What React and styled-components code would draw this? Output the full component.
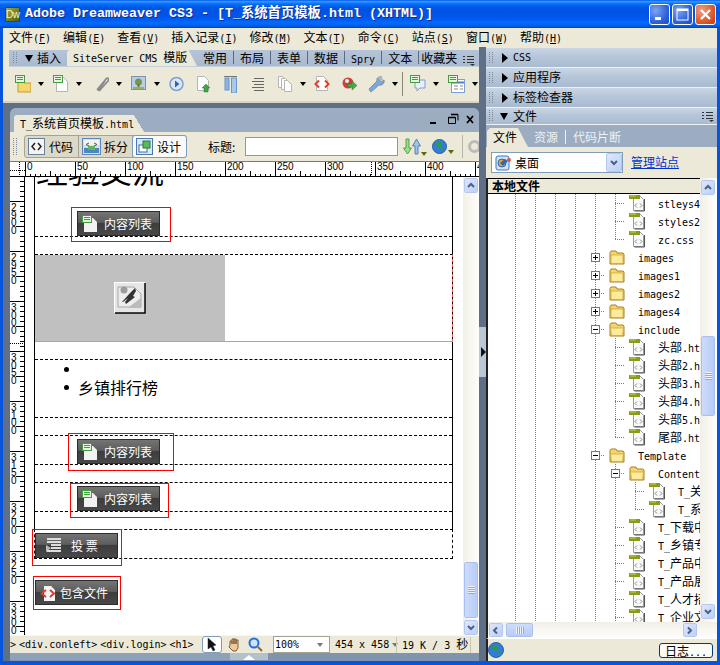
import React from 'react';
import styled, { createGlobalStyle, css } from 'styled-components';

const Global = createGlobalStyle`
  html, body { margin: 0; padding: 0; overflow: hidden; background: #0855dd; }
  * { box-sizing: border-box; }
`;

const CJK = `"Noto Sans CJK SC", "Liberation Sans", sans-serif`;
const beige = '#ece9d8';
const dotted = '#7d7d7d';

const Lat = styled.span`
  font-family: "DejaVu Sans Mono", monospace;
  font-size: 10px;
  white-space: pre;
`;
const Mix = ({ children }) =>
  String(children)
    .split(/([\x20-\x7e]+)/)
    .filter(Boolean)
    .map((s, i) => (/^[\x20-\x7e]/.test(s) ? <Lat key={i}>{s}</Lat> : <React.Fragment key={i}>{s}</React.Fragment>));

/* ---------- window frame ---------- */
const Win = styled.div`
  width: 720px;
  height: 665px;
  background: #0855dd;
  display: flex;
  flex-direction: column;
  overflow: hidden;
  font-family: ${CJK};
  font-size: 12px;
  line-height: 16px;
  color: #000;
`;
const TitleBar = styled.div`
  height: 28px;
  flex: none;
  display: flex;
  align-items: center;
  padding: 0 4px 0 5px;
  background: linear-gradient(to bottom, #0058ee 0%, #3593ff 5%, #288eff 8%, #127dff 11%, #036ffc 14%, #0262ee 20%, #0057e5 28%, #0054e3 36%, #0055eb 60%, #005bf5 70%, #026afe 80%, #0062ef 90%, #0052d6 96%, #0040ab 100%);
`;
const DwLogo = styled.div`
  width: 15px;
  height: 15px;
  flex: none;
  background: linear-gradient(135deg, #a3ac3a, #4f5c12);
  border: 1px solid #3e4a0e;
  color: #f4f6cf;
  font: 10px/13px "Liberation Sans", sans-serif;
  letter-spacing: -0.5px;
  text-align: center;
`;
const TitleText = styled.div`
  margin-left: 5px;
  flex: 1;
  font-family: "Liberation Mono", ${CJK};
  font-weight: bold;
  font-size: 13.33px;
  line-height: 16px;
  color: #fff;
  text-shadow: 1px 1px 0 #0f2a90;
  white-space: pre;
`;
const Caption = styled.div`
  width: 21px;
  height: 21px;
  margin-left: 2px;
  display: flex;
  align-items: center;
  justify-content: center;
  border: 1px solid #fff;
  border-radius: 3px;
  background: ${(p) => (p.$close ? 'radial-gradient(circle at 30% 30%, #f0a080, #dc5a2c 60%, #c23a10)' : 'radial-gradient(circle at 30% 30%, #7ea5f0, #2f62dc 60%, #1d49c4)')};
`;
const MenuBar = styled.div`
  height: 19px;
  flex: none;
  margin: 0 3px;
  padding-left: 6px;
  display: flex;
  align-items: center;
  gap: 12px;
  background: ${beige};
`;
const MenuItem = styled.span`
  white-space: nowrap;
  u { text-decoration: underline; }
`;
const Workspace = styled.div`
  flex: 1;
  min-height: 0;
  margin: 0 3px 4px;
  display: flex;
`;
const LeftCol = styled.div`
  width: 476px;
  flex: none;
  display: flex;
  flex-direction: column;
  background: #5f7086;
`;
const Splitter = styled.div`
  width: 7px;
  flex: none;
  background: #5f7086;
  padding-top: 280px;
`;
const SplitGrip = styled.div`
  height: 50px;
  background: #bac7d7;
  display: flex;
  align-items: center;
  padding: 0 0 0 2px;
  &::after {
    content: '';
    border-left: 5px solid #111;
    border-top: 5px solid transparent;
    border-bottom: 5px solid transparent;
  }
`;
const RightCol = styled.div`
  flex: 1;
  min-width: 0;
  display: flex;
  flex-direction: column;
  background: ${beige};
  padding-top: 1px;
`;

/* ---------- insert panel ---------- */
const InsertPanel = styled.div`
  height: 56px;
  flex: none;
  background: ${beige};
  padding: 3px 0 0 6px;
  border-bottom: 2px solid #d8d4c0;
`;
const TabStrip = styled.div`
  height: 17px;
  display: flex;
  align-items: flex-end;
  background: linear-gradient(#b5c4d8, #a9bacf);
  border-bottom: 1px solid #c5d0de;
`;
const Grip = styled.i`
  width: 5px;
  height: ${(p) => p.$h || 12}px;
  flex: none;
  align-self: center;
  margin: ${(p) => p.$m || '0'};
  background: repeating-linear-gradient(to bottom, #7a8798 0 1px, transparent 1px 2px) 0 0 / 1px 100% no-repeat,
    repeating-linear-gradient(to bottom, #7a8798 0 1px, transparent 1px 2px) 3px 0 / 1px 100% no-repeat;
`;
const Tri = styled.i`
  flex: none;
  align-self: center;
  ${(p) =>
    p.$open
      ? css`border-top: 7px solid #000; border-left: 4.5px solid transparent; border-right: 4.5px solid transparent;`
      : css`border-left: 6px solid #000; border-top: 5px solid transparent; border-bottom: 5px solid transparent;`}
  margin: ${(p) => p.$m || '0'};
`;
const StripLabel = styled.span`
  align-self: center;
  width: 30px;
  white-space: nowrap;
`;
const ActiveTab = styled.div`
  width: 130px;
  height: 17px;
  line-height: 15px;
  flex: none;
  padding-left: 6px;
  background: ${beige};
  white-space: pre;
  clip-path: polygon(0 100%, 0 3px, 3px 0, 121px 0, 100% 100%);
`;
const StripTab = styled.div`
  height: 13px;
  line-height: 13px;
  margin: 0 0 2px ${(p) => (p.$last ? -4 : 0)}px;
  padding: 0 6px;
  white-space: pre;
  border-right: ${(p) => (p.$last ? '0' : '1px solid #5c6c80')};
`;
const Tools = styled.div`
  height: 33px;
  padding: 8px 0 0 6px;
  display: flex;
  align-items: flex-start;
`;
const Tool = styled.div`
  width: ${(p) => p.$w}px;
  flex: none;
  display: flex;
  align-items: center;
`;
const Caret = styled.i`
  flex: none;
  margin-left: ${(p) => p.$m ?? 7}px;
  border-top: 4px solid ${(p) => p.$c || '#000'};
  border-left: 3.5px solid transparent;
  border-right: 3.5px solid transparent;
`;
const ToolSep = styled.i`
  width: 1px;
  height: 24px;
  flex: none;
  margin: -3px 7px 0 0;
  background: #8b8878;
`;

/* ---------- document window ---------- */
const DocWindow = styled.div`
  flex: 1;
  min-height: 0;
  margin: 5px 0 0 7px;
  display: flex;
  flex-direction: column;
  border-radius: 6px 6px 0 0;
  overflow: hidden;
  background: #9dadc1;
`;
const DocHead = styled.div`
  height: 24px;
  flex: none;
  display: flex;
  align-items: flex-end;
  padding-left: 4px;
  background: #9dadc1;
`;
const DocTab = styled.div`
  width: 130px;
  height: 17px;
  flex: none;
  display: flex;
  align-items: center;
  padding-left: 6px;
  background: linear-gradient(to bottom right, ${beige} 0, ${beige} 100%) 0 0 / 120px 100% no-repeat,
    linear-gradient(to top right, ${beige} 50%, transparent 50%) 120px 0 / 10px 100% no-repeat;
  border-radius: 3px 0 0 0;
  white-space: pre;
  span { white-space: pre; }
`;
const DocCtl = styled.div`
  margin-left: auto;
  align-self: center;
  display: flex;
`;
const DocToolbar = styled.div`
  height: 30px;
  flex: none;
  display: flex;
  align-items: center;
  padding-left: 3px;
  background: ${beige};
  border-bottom: 1px solid #7a7a72;
  overflow: hidden;
`;
const ViewGroup = styled.div`
  display: flex;
  height: 23px;
  margin-left: 6px;
  flex: none;
  border: 1px solid #a5a392;
  border-radius: 3px;
  background: #dcd9c8;
`;
const ViewBtn = styled.div`
  width: 54px;
  display: flex;
  align-items: center;
  padding-left: 3px;
  gap: 3px;
  font-size: 12px;
  border-right: 1px solid #a5a392;
  ${(p) => p.$on && css`
    background: #fafafa;
    border: 1px solid #7f9db9;
    border-radius: 3px;
    margin: -1px;
    width: 55px;
  `}
`;
const DocFieldLabel = styled.span`
  margin-left: 21px;
  width: 37px;
  flex: none;
  white-space: nowrap;
`;
const TitleInput = styled.div`
  width: 153px;
  height: 19px;
  flex: none;
  background: #fff;
  border: 1px solid #7f9db9;
`;
const ToolIconWrap = styled.div`
  display: flex;
  align-items: flex-end;
  flex: none;
  margin-left: ${(p) => p.$m}px;
`;
const ThinSep = styled.i`
  width: 1px;
  height: 23px;
  flex: none;
  margin-left: 8px;
  background: #b8b5a4;
`;
const Ring = styled.i`
  width: 13px;
  height: 13px;
  margin-left: 5px;
  flex: none;
  border: 3px solid #bbb;
  border-radius: 50%;
`;
const HRulerRow = styled.div`
  height: 15px;
  flex: none;
  display: flex;
  background: #fff;
  position: relative;
  border-bottom: 1px solid #000;
  overflow: hidden;
`;
const RulerCorner = styled.div`
  width: 15px;
  flex: none;
  background:
    repeating-linear-gradient(to bottom, #000 0 1px, transparent 1px 2px) 9px 0 / 1px 100% no-repeat,
    repeating-linear-gradient(to right, #000 0 1px, transparent 1px 2px) 0 8px / 100% 1px no-repeat;
`;
const HMark = styled.div`
  width: 50px;
  flex: none;
  height: 15px;
  padding-left: 1px;
  border-left: 1px solid #000;
  font: 10px/10px "Liberation Sans", sans-serif;
  background:
    repeating-linear-gradient(to right, transparent 0 4px, #000 4px 5px) 0 100% / 100% 3px no-repeat,
    linear-gradient(#000, #000) 24px 100% / 1px 6px no-repeat;
`;
const HMarker = styled.i`
  position: absolute;
  left: ${(p) => p.$x}px;
  top: 0;
  width: 1px;
  height: 14px;
  background: repeating-linear-gradient(to bottom, #000 0 1px, #fff 1px 2px);
`;
const DocBody = styled.div`
  height: 458px;
  flex: none;
  display: flex;
`;
const VRuler = styled.div`
  width: 15px;
  flex: none;
  padding-top: 24px;
  background: #fff;
  border-right: 1px solid #000;
  overflow: hidden;
  position: relative;
`;
const VMark = styled.div`
  height: 50px;
  padding: 2px 0 0 1px;
  border-top: 1px solid #000;
  font: 10px/7.5px "Liberation Sans", sans-serif;
  color: #000;
  background:
    repeating-linear-gradient(to bottom, transparent 0 4px, #000 4px 5px) 100% 0 / 4px 100% no-repeat,
    linear-gradient(#000, #000) 100% 24px / 8px 1px no-repeat;
  span { display: block; width: 6px; word-break: break-all; }
`;
const VTick = styled.div`
  height: 24px;
  margin-top: -24px;
  background: repeating-linear-gradient(to bottom, transparent 0 4px, #000 4px 5px) 100% 0 / 4px 100% no-repeat;
`;
const VMarker = styled.i`
  position: absolute;
  left: 0;
  top: 166px;
  width: 14px;
  height: 1px;
  background: repeating-linear-gradient(to right, #000 0 1px, #fff 1px 2px);
`;
const Canvas = styled.div`
  width: 438px;
  flex: none;
  background: #fff;
  padding-left: 9px;
  overflow: hidden;
`;
const Page = styled.div`
  display: flow-root;
  width: 419px;
  height: 352px;
  border-left: 1px solid #000;
  border-right: 1px solid #000;
`;
const Heading = styled.h1`
  margin: -24px 0 0 1px;
  font: 400 32px/32px ${CJK};
  height: 32px;
  white-space: nowrap;
`;
const Block = styled.div`
  display: flow-root;
  height: ${(p) => p.$h}px;
  margin-top: ${(p) => p.$t ?? 17}px;
  border-top: ${(p) => (p.$noTop ? '0' : '1px dashed #000')};
  border-bottom: 1px dashed #000;
`;
const LastBlock = styled.div`
  display: flow-root;
  width: 419px;
  height: 30px;
  border: 1px dashed #000;
`;
const FlashBlock = styled.div`
  height: 88px;
  margin: 17px -1px 0 0;
  display: flex;
  border-top: 1px dashed #000;
  border-right: 1px dashed #e36060;
  border-bottom: 1px solid #f08a8a;
`;
const FlashGray = styled.div`
  width: 190px;
  display: flex;
  align-items: center;
  justify-content: center;
  background: #c0c0c0;
`;
const Bullets = styled.ul`
  margin: 0;
  padding: 0 0 0 43px;
  font: 16px/18px ${CJK};
  list-style: none;
  li { height: 18px; position: relative; }
  li::before {
    content: '';
    position: absolute;
    left: -14px;
    top: 7px;
    width: 5px;
    height: 5px;
    border-radius: 50%;
    background: #000;
  }
`;
const RedBox = styled.div`
  width: ${(p) => p.$w}px;
  height: ${(p) => p.$h}px;
  margin: ${(p) => p.$t}px 0 0 ${(p) => p.$l}px;
  padding: ${(p) => p.$py}px 0 0 ${(p) => p.$px}px;
  border: 1px solid #f00;
`;
const DarkBtn = styled.div`
  width: 83px;
  height: 25px;
  display: flex;
  align-items: center;
  padding-left: ${(p) => p.$pad}px;
  gap: ${(p) => p.$gap}px;
  border: 1px solid #2c2c2c;
  color: #fff;
  font-size: 12px;
  white-space: pre;
  background: linear-gradient(#747474 0, #5d5d5d 45%, #3d3d3d 50%, #484848 100%);
`;
/* scrollbars */
const VBar = styled.div`
  width: 16px;
  flex: none;
  display: flex;
  flex-direction: column;
  padding: 1px 1px;
  background: linear-gradient(to right, #f1efe7, #fefefb);
`;
const ScrollBtn = styled.div`
  width: ${(p) => p.$w || 14}px;
  height: ${(p) => p.$h || 15}px;
  flex: none;
  display: flex;
  align-items: center;
  justify-content: center;
  margin-top: ${(p) => p.$t ?? 0}px;
  margin-left: ${(p) => p.$ml || 0};
  border: 1px solid #fff;
  border-radius: 2px;
  outline: 1px solid #b4c8ee;
  outline-offset: -1px;
  background: linear-gradient(135deg, #dde7fd, #bdcff9);
`;
const Thumb = styled.div`
  flex: none;
  width: ${(p) => p.$w}px;
  height: ${(p) => p.$h}px;
  margin: ${(p) => p.$m || '0'};
  display: flex;
  align-items: center;
  justify-content: center;
  border: 1px solid #fff;
  border-radius: 2px;
  outline: 1px solid #a9c0ee;
  outline-offset: -1px;
  background: linear-gradient(${(p) => (p.$h > p.$w ? 'to right' : 'to bottom')}, #cddcfb, #b8cbf8);
`;
const ThumbLines = styled.i`
  width: ${(p) => (p.$h ? 8 : 7)}px;
  height: ${(p) => (p.$h ? 7 : 8)}px;
  background: repeating-linear-gradient(${(p) => (p.$h ? 'to right' : 'to bottom')}, #eef3fe 0 1px, #8fa9e6 1px 2px);
`;
/* status */
const DocStatus = styled.div`
  height: 18px;
  flex: none;
  display: flex;
  align-items: center;
  background: ${beige};
  border-top: 1px solid #f8f7f0;
  overflow: hidden;
`;
const TagPath = styled.div`
  width: 192px;
  flex: none;
  display: flex;
  gap: 3px;
  white-space: pre;
`;
const PointerBox = styled.div`
  width: 20px;
  height: 17px;
  flex: none;
  display: flex;
  align-items: center;
  justify-content: center;
  background: #fff;
  border: 1px solid #7f9db9;
  border-radius: 3px;
`;
const Zoombox = styled.div`
  width: 57px;
  height: 17px;
  flex: none;
  display: flex;
  align-items: center;
  justify-content: space-between;
  padding: 0 6px 0 1px;
  margin-left: 9px;
  background: #fff;
  border: 1px solid #a5a392;
`;
const StatusText = styled.div`
  margin-left: ${(p) => p.$m}px;
  width: ${(p) => p.$w}px;
  flex: none;
  white-space: pre;
  display: flex;
  align-items: center;
`;
const StatusSep = styled.i`
  width: 1px;
  height: 16px;
  flex: none;
  background: #c9c6b4;
`;
const StatusTools = styled.div`
  display: flex;
  align-items: center;
  flex: none;
  gap: 5px;
`;
const BottomStrip = styled.div`
  height: 8px;
  flex: none;
  display: flex;
  background: #8094ae;
`;
const BottomLight = styled.div`
  width: 258px;
  height: 7px;
  flex: none;
  background: #8fa1b8;
  display: flex;
  justify-content: flex-end;
`;
const BottomTab = styled.div`
  width: 38px;
  background: #b5c0cd;
  display: flex;
  justify-content: center;
  padding-top: 1px;
  &::after {
    content: '';
    border-bottom: 5px solid #fff;
    border-left: 6px solid transparent;
    border-right: 6px solid transparent;
  }
`;

/* ---------- right panels ---------- */
const PanelHead = styled.div`
  height: ${(p) => p.$h || 20}px;
  flex: none;
  display: flex;
  align-items: center;
  padding: 0 3px;
  background: linear-gradient(#cbd6e4, #b8c7da 40%, #a9bbd1);
  border-bottom: 1px solid #eef1f5;
`;
const PanelLabel = styled.span`
  margin: -1px 0 0 5px;
  flex: 1;
  white-space: pre;
  font-size: 12px;
`;
const FileTabs = styled.div`
  height: 22px;
  flex: none;
  display: flex;
  align-items: flex-end;
  padding-left: 1px;
  background: #9dadc1;
  color: #eef1f5;
`;
const FileTabOn = styled.div`
  width: 41px;
  height: 19px;
  flex: none;
  padding: 1px 0 0 6px;
  color: #000;
  background: ${beige};
  clip-path: polygon(0 100%, 0 3px, 3px 0, 31px 0, 100% 100%);
`;
const FileTab = styled.div`
  height: 14px;
  line-height: 14px;
  margin: 0 0 3px ${(p) => p.$m}px;
  padding-right: 7px;
  white-space: nowrap;
  border-right: ${(p) => (p.$sep ? '1px solid #eef1f5' : '0')};
`;
const SiteRow = styled.div`
  height: 31px;
  flex: none;
  display: flex;
  align-items: flex-start;
  padding: 5px 0 0 5px;
`;
const SiteSelect = styled.div`
  width: 132px;
  height: 21px;
  flex: none;
  display: flex;
  align-items: center;
  padding-left: 3px;
  gap: 4px;
  background: #fff;
  border: 1px solid #7f9db9;
`;
const SiteLink = styled.span`
  margin: 2px 0 0 8px;
  color: #0033cc;
  text-decoration: underline;
`;
const FileArea = styled.div`
  flex: 1;
  min-height: 0;
  display: flex;
  flex-direction: column;
  border-left: 2px solid #222;
  background: #fff;
`;
const FileTop = styled.div`
  flex: 1;
  min-height: 0;
  display: flex;
`;
const FileMain = styled.div`
  width: 212px;
  flex: none;
  display: flex;
  flex-direction: column;
  overflow: hidden;
`;
const LocalHead = styled.div`
  height: 16px;
  flex: none;
  padding-left: 4px;
  line-height: 14px;
  font-weight: 700;
  background: ${beige};
  border-top: 1px solid #000;
  border-bottom: 1px solid #000;
`;
const Tree = styled.div`
  flex: 1;
  min-height: 0;
  padding-left: 17px;
  overflow: hidden;
  white-space: nowrap;
`;
const Row = styled.div`
  height: 18px;
  display: flex;
`;
const vLine = (h) => `repeating-linear-gradient(to bottom, ${dotted} 0 1px, transparent 1px 2px) 10px 0 / 1px ${h} no-repeat`;
const Guide = styled.i`
  width: 20px;
  flex: none;
  background: ${vLine('100%')};
`;
const Node = styled.i`
  width: 20px;
  flex: none;
  background:
    repeating-linear-gradient(to right, ${dotted} 0 1px, transparent 1px 2px) 10px 9px / 10px 1px no-repeat,
    ${(p) => vLine(p.$end ? '10px' : '100%')};
`;
const ExpandBox = styled.b`
  display: block;
  width: 9px;
  height: 9px;
  margin: 5px 0 0 6px;
  border: 1px solid #777;
  background:
    linear-gradient(#000, #000) center / 5px 1px no-repeat,
    ${(p) => (p.$plus ? 'linear-gradient(#000, #000) center / 1px 5px no-repeat,' : '')} #fff;
`;
const NodeIcon = styled.span`
  width: 16px;
  height: 18px;
  flex: none;
  margin-left: 4px;
`;
const NodeLabel = styled.span`
  margin-left: 13px;
  line-height: 18px;
  white-space: pre;
`;
const HBar = styled.div`
  height: 16px;
  flex: none;
  display: flex;
  align-items: center;
  padding-left: 1px;
  background: linear-gradient(#f1efe7, #fefefb);
`;
const Footer = styled.div`
  height: 23px;
  flex: none;
  display: flex;
  align-items: center;
  justify-content: space-between;
  padding: 0 4px 0 0;
  background: ${beige};
  border-top: 1px solid #fff;
  border-left: 2px solid #222;
`;
const LogBtn = styled.div`
  width: 54px;
  height: 15px;
  line-height: 13px;
  text-align: center;
  background: #fbfaf4;
  border: 1px solid #003c74;
  border-radius: 3px;
`;

/* ---------- icons ---------- */
const Svg = ({ w = 16, h = 16, children }) => (
  <svg width={w} height={h} viewBox={`0 0 ${w} ${h}`} style={{ flex: 'none', display: 'block' }}>{children}</svg>
);
const Badge = ({ x = 0, y = 0 }) => (
  <g transform={`translate(${x} ${y})`}>
    <rect x=".5" y=".5" width="9" height="7" fill="#e9f5e3" stroke="#3fa03a" />
    <path d="M2 2.5h6M2 4.5h6" stroke="#3fa03a" />
  </g>
);
const Page_ = ({ x = 3, y = 1, w = 12, h = 15, fill = '#fdfdfd', s = '#b5b5b5' }) => (
  <path d={`M${x + .5} ${y + .5}h${w - 5}l4 4v${h - 5}h-${w - 1}z`} fill={fill} stroke={s} />
);
const ListDoc = () => <Svg h={18}><Page_ x={3} y={2} /><Badge y={0} /></Svg>;
const BtnDoc = () => <Svg h={18}><path d="M2 3h9l4 4v10H2z" fill="#f2f2f2" /><Badge x={0} y={0} /></Svg>;
const ListFolder = () => (
  <Svg h={18}><path d="M3 7h5l1 1h7v9H3z" fill="#f5d66f" stroke="#c49a2e" /><Badge y={0} /></Svg>
);
const Clip = () => (
  <Svg h={18}><path d="M4 15L13 4c2-2 4 0 2 2L7 15c-1 1-2 0-1-1l6-8" fill="none" stroke="#8a8a8a" strokeWidth="1.8" /></Svg>
);
const Pic = () => (
  <Svg h={18}><rect x=".5" y="1.5" width="14" height="13" fill="#b9cfe6" stroke="#7b93ad" /><circle cx="7.5" cy="7" r="3.5" fill="#6f9a4e" /><rect x="6.5" y="9" width="2" height="4" fill="#8a6a3a" /><rect x="2" y="12" width="11" height="2" fill="#8db36a" /></Svg>
);
const Play = () => (
  <Svg h={18}><circle cx="7.5" cy="9" r="6.5" fill="#dbe7f6" stroke="#7da0cf" strokeWidth="1.5" /><path d="M6 5.5l4.5 3.5L6 12.5z" fill="#2c63b8" /></Svg>
);
const DocUp = () => (
  <Svg h={18}><Page_ x={1} y={1} /><path d="M10 9l4 4h-2v4H8v-4H6z" fill="#43a447" stroke="#2f7f33" strokeWidth=".5" /></Svg>
);
const Bars = () => (
  <Svg w={13} h={18}><path d="M0 1.5h13" stroke="#777" /><rect x="1" y="3" width="4" height="12" fill="#8ab4e4" stroke="#6d95c8" /><rect x="7.5" y="3" width="5" height="15" fill="#a8c8ec" stroke="#6d95c8" /></Svg>
);
const Lines = () => (
  <Svg w={13} h={18}><path d="M3 3.5h10M1 6.5h12M3 9.5h10M1 12.5h12M3 15.5h10" stroke="#666" /></Svg>
);
const Docs = () => (
  <Svg h={18}><Page_ x={1} y={1} w={9} h={12} /><Page_ x={4} y={3} w={9} h={12} /><Page_ x={7} y={5} w={8} h={12} /></Svg>
);
const CodeDoc = () => (
  <Svg h={18}><Page_ x={2} y={1} /><path d="M5 5.5L1.5 9 5 12.5M11 5.5L14.5 9 11 12.5" fill="none" stroke="#e5392c" strokeWidth="2" /></Svg>
);
const BallArrow = () => (
  <Svg h={18}><circle cx="6" cy="8" r="5.5" fill="#c9433c" /><circle cx="5" cy="6" r="2" fill="#eee" /><path d="M6 9h4V6l5 4.5L10 15v-3H6z" fill="#4aa845" stroke="#2d7a2c" strokeWidth=".5" /></Svg>
);
const WrenchIco = () => (
  <Svg w={17} h={18}><path d="M2 16l-1-2 8-8c-1-3 2-5 5-4l-3 3 2 2 3-2c1 3-2 6-5 5l-8 7z" fill="#7fa7d8" stroke="#5f7fa8" strokeWidth=".7" /><path d="M10 2h4l1 3-3 1z" fill="#b5b5b5" /></Svg>
);
const Bubble = () => (
  <Svg h={18}><path d="M5 5h10v8h-5l-3 3v-3H5z" fill="#e8effa" stroke="#7da0cf" /><Badge y={0} /></Svg>
);
const FormIco = () => (
  <Svg w={17} h={18}><rect x="3.5" y="4.5" width="13" height="13" fill="#fff" stroke="#7da0cf" /><path d="M3 7.5h13" stroke="#4f80bf" strokeWidth="2" /><path d="M6 11h4M12 11h3M6 14h4M12 14h3" stroke="#888" /><Badge y={0} /></Svg>
);
const Opts = () => (
  <Svg w={12} h={11}><path d="M0 1.5h2M4 1.5h7M0 4.5h2M4 4.5h7M0 7.5h2M4 7.5h7" stroke="#333" /><path d="M7 9h5l-2.5 2z" fill="#333" /></Svg>
);
const Chev = ({ d = 'up' }) => {
  const p = { up: 'M2 6l3-3 3 3', down: 'M2 3l3 3 3-3', left: 'M6 1.5L3 4.5l3 3', right: 'M3 1.5l3 3-3 3' }[d];
  return <Svg w={10} h={9}><path d={p} fill="none" stroke="#4d6185" strokeWidth="2" /></Svg>;
};
const FileGlyph = () => (
  <Svg h={18}>
    <path d="M4.5 1.5h6l4 4v11h-10z" fill="#fafafa" stroke="#9a9a9a" />
    <path d="M15.5 5v12h-10" fill="none" stroke="#555" />
    <rect x="0" y="1" width="11" height="4" fill="#8b9a1c" />
    <path d="M1 2h6" stroke="#c6d24e" />
    <path d="M8 9.5L6 11.5l2 2M11 9.5l2 2-2 2" fill="none" stroke="#888" />
  </Svg>
);
const FolderGlyph = ({ open }) => (
  <Svg h={18}>
    <path d="M1 4.5L2 3h5l1 2h6l1 1v10H1z" fill="#f6d46c" stroke="#a8821f" />
    <path d={open ? 'M1.5 8h13l-1 7.5h-11z' : 'M2 7h12v8.5H2z'} fill="#fdeb9d" stroke="#c9a02f" strokeWidth=".7" />
  </Svg>
);
const Globe = ({ s = 15 }) => (
  <Svg w={s} h={s}>
    <circle cx={s / 2} cy={s / 2} r={s / 2 - .5} fill="#2f7ed8" stroke="#2a5ea8" />
    <path d={`M${s * .25} ${s * .25}l${s * .3} -${s * .08} ${s * .1} ${s * .3} -${s * .2} ${s * .1} -${s * .15} -${s * .1}z M${s * .55} ${s * .65}l${s * .25} -${s * .1} -${s * .05} ${s * .25}z`} fill="#2f9b46" />
  </Svg>
);
const SyncIco = () => (
  <Svg w={18} h={18}>
    <path d="M3 1h3v9h2.5l-4 6-4-6H3z" fill="#9edb8b" stroke="#3d8f3d" strokeWidth=".8" />
    <path d="M12 16h3V8h2.5l-4-7-4 7H12z" fill="#9cc4ea" stroke="#3d6f9f" strokeWidth=".8" />
  </Svg>
);
const DesktopIco = () => (
  <Svg>
    <rect x="1" y="1" width="13" height="14" rx="2" fill="#cfe3f6" stroke="#3f78bd" />
    <circle cx="7" cy="8" r="4" fill="#e9a13c" stroke="#2f68b0" />
    <path d="M5 8l5-4 3 2-5 5z" fill="#2f68b0" />
    <circle cx="14" cy="5" r="2" fill="#e3583c" />
  </Svg>
);
const CodeBtn = () => (
  <Svg w={18} h={18}><rect x=".5" y=".5" width="16" height="16" fill="#f4f4f4" stroke="#68809c" /><path d="M7 5L4 8.5 7 12M10 5l3 3.5-3 3.5" fill="none" stroke="#222" strokeWidth="1.5" /></Svg>
);
const SplitBtn = () => (
  <Svg w={19} h={18}><rect x=".5" y=".5" width="18" height="16" fill="#cfe0f2" stroke="#5f86b8" /><rect x="2" y="2" width="15" height="5" fill="#f2f2f2" /><path d="M7 5L4 6.5 7 8M12 5l3 1.5-3 1.5" fill="none" stroke="#555" /><rect x="2" y="10" width="15" height="5" fill="#4e86c4" /><rect x="6" y="8" width="7" height="4" fill="#5cb85c" /></Svg>
);
const DesignBtn = () => (
  <Svg w={18} h={18}><rect x=".5" y=".5" width="16" height="16" fill="#dbe8f6" stroke="#4a78b0" /><rect x="3" y="7" width="8" height="7" fill="#fff" stroke="#3a6aa5" /><rect x="7" y="3" width="7" height="7" fill="#5cb85c" stroke="#2d7a2c" /></Svg>
);
const Arrow = () => <Svg w={10} h={15}><path d="M1 1l0 11 3-2 2 4 2-1-2-4 3-1z" fill="#111" stroke="#333" strokeWidth=".5" /></Svg>;
const Hand = () => (
  <Svg h={15}><path d="M3 8V4h2v3-5h2v5V2h2v5-4h2v8l-2 3H6L2 10z" fill="#f2c79a" stroke="#7a5a3a" /></Svg>
);
const Mag = () => (
  <Svg h={15}><circle cx="6" cy="6" r="4.5" fill="#cfe3fb" stroke="#2a6fd6" strokeWidth="2" /><path d="M10 10l4 4" stroke="#8a6a3a" strokeWidth="2" /></Svg>
);
const Plugin = () => (
  <Svg w={32} h={32}>
    <rect x=".5" y=".5" width="30" height="30" fill="#e6e6e6" stroke="#fff" />
    <path d="M31 1v30H1" fill="none" stroke="#000" strokeWidth="1.5" />
    <path d="M4 5h16l7 7v13H4z" fill="#ededed" stroke="#a8a8a8" />
    <circle cx="10" cy="8" r="3.5" fill="#9c9c9c" />
    <path d="M8 20l8-9 5-5 1 3-3 5 2 1-9 7-1-2 3-4-5 4z" fill="#333" />
    <path d="M15 25l12-9v10H15z" fill="#bbb" />
  </Svg>
);
const VoteIco = () => (
  <Svg w={16} h={16}><path d="M1 7l5 3-5 4z" fill="#bbb" /><path d="M2 1h14M2 4h14M6 7h10M6 10h10M2 13h14" stroke="#ddd" strokeWidth="2" /></Svg>
);
const RedCodeIco = () => (
  <Svg h={18}><path d="M4 2h7l4 4v11H4z" fill="#f4f4f4" /><path d="M6 6L1.5 9.5 6 13M10 6l4 3.5L10 13" fill="none" stroke="#e5392c" strokeWidth="2" /></Svg>
);
const Min = () => <Svg w={11} h={11}><rect x="1" y="8" width="6" height="3" fill="#fff" /></Svg>;
const Max = () => <Svg w={13} h={13}><rect x="1" y="1" width="11" height="11" fill="none" stroke="#fff" /><rect x="1" y="1" width="11" height="2" fill="#fff" /></Svg>;
const CloseX = () => <Svg w={13} h={13}><path d="M2 2l9 9M11 2l-9 9" stroke="#fff" strokeWidth="2.2" /></Svg>;
const DocMin = () => <Svg w={20} h={14}><rect x="3" y="9" width="6" height="2" fill="#000" /></Svg>;
const DocRest = () => <Svg w={18} h={14}><path d="M4 1.5h7v6M1.5 4.5h7v6h-7z" fill="none" stroke="#000" /><path d="M4 1.5h7M1.5 4.5h7" stroke="#000" strokeWidth="1.5" /></Svg>;
const DocX = () => <Svg w={14} h={14}><path d="M2 3l6 7M8 3l-6 7" stroke="#000" strokeWidth="1.8" /></Svg>;

/* ---------- data ---------- */
const MENUS = [['文件', 'F'], ['编辑', 'E'], ['查看', 'V'], ['插入记录', 'I'], ['修改', 'M'], ['文本', 'T'], ['命令', 'C'], ['站点', 'S'], ['窗口', 'W'], ['帮助', 'H']];
const TOOLS = [
  [ListFolder, 38, 1], [ListDoc, 40, 1], [Clip, 38, 1], [Pic, 38, 1], [Play, 27], [DocUp, 28], [Bars, 27], [Lines, 26],
  [Docs, 37, 1], [CodeDoc, 28], [BallArrow, 26], [WrenchIco, 34, 1, 1], [Bubble, 38, 1], [FormIco, 38, 1],
];
const STRIP = ['常用', '布局', '表单', '数据', 'Spry', '文本'];
const f = (l, name, end) => ({ kind: 'file', l, name, end });
const d = (kind, l, name) => ({ kind, l, name });
const ROWS = [
  f(5, 'stleys4.css'), f(5, 'styles2.css'), f(5, 'zc.css', true),
  d('plus', 4, 'images'), d('plus', 4, 'images1'), d('plus', 4, 'images2'), d('plus', 4, 'images4'),
  d('minus', 4, 'include'),
  f(5, '头部.htm'), f(5, '头部2.htm'), f(5, '头部3.htm'), f(5, '头部4.htm'), f(5, '头部5.htm'), f(5, '尾部.htm', true),
  d('minus', 4, 'Template'),
  d('minus', 5, 'Content'),
  f(6, 'T_关于我们.html'), f(6, 'T_系统内容.html', true),
  f(5, 'T_下载中心.html'), f(5, 'T_乡镇专题.html'), f(5, 'T_产品中心.html'), f(5, 'T_产品展示.html'), f(5, 'T_人才招聘.html'), f(5, 'T_企业文化.html'),
];
const H_MARKS = Array.from({ length: 10 }, (_, i) => i * 50);
const V_MARKS = ['2900', '2950', '3000', '3050', '3100', '3150', '3200', '3250', '3300'];

const Dark = () => (
  <DarkBtn $pad={4} $gap={6}><BtnDoc />内容列表</DarkBtn>
);

export default function App() {
  return (
    <>
      <Global />
      <Win>
        <TitleBar>
          <DwLogo>Dw</DwLogo>
          <TitleText>Adobe Dreamweaver CS3 - [T_系统首页模板.html (XHTML)]</TitleText>
          <Caption><Min /></Caption>
          <Caption><Max /></Caption>
          <Caption $close><CloseX /></Caption>
        </TitleBar>
        <MenuBar>
          {MENUS.map(([t, k]) => (
            <MenuItem key={k}>{t}<Lat>(<u>{k}</u>)</Lat></MenuItem>
          ))}
        </MenuBar>
        <Workspace>
          <LeftCol>
            <InsertPanel>
              <TabStrip>
                <Grip $m="0 7px 0 4px" />
                <Tri $open $m="0 4px 0 0" />
                <StripLabel>插入</StripLabel>
                <ActiveTab><Mix>SiteServer CMS 模版</Mix></ActiveTab>
                {STRIP.map((t) => <StripTab key={t}><Mix>{t}</Mix></StripTab>)}
                <StripTab $last>收藏夹</StripTab>
                <Opts />
              </TabStrip>
              <Tools>
                {TOOLS.map(([Icon, w, caret, sep], i) => (
                  <React.Fragment key={i}>
                    <Tool $w={w}>
                      <Icon />
                      {caret && <Caret />}
                    </Tool>
                    {sep && <ToolSep />}
                  </React.Fragment>
                ))}
              </Tools>
            </InsertPanel>
            <DocWindow>
              <DocHead>
                <DocTab><span><Mix>T_系统首页模板.html</Mix></span></DocTab>
                <DocCtl><DocMin /><DocRest /><DocX /></DocCtl>
              </DocHead>
              <DocToolbar>
                <Grip $h={18} />
                <ViewGroup>
                  <ViewBtn><CodeBtn />代码</ViewBtn>
                  <ViewBtn><SplitBtn />拆分</ViewBtn>
                  <ViewBtn $on><DesignBtn />设计</ViewBtn>
                </ViewGroup>
                <DocFieldLabel>标题:</DocFieldLabel>
                <TitleInput />
                <ToolIconWrap $m={5}><SyncIco /><Caret $m={0} $c="#5a6a10" /></ToolIconWrap>
                <ToolIconWrap $m={5}><Globe /><Caret $m={1} $c="#5a6a10" /></ToolIconWrap>
                <ThinSep />
                <Ring />
              </DocToolbar>
              <HRulerRow>
                <RulerCorner />
                {H_MARKS.map((m) => <HMark key={m}>{m}</HMark>)}
                <HMarker $x={361} />
              </HRulerRow>
              <DocBody>
                <VRuler>
                  <VTick />
                  {V_MARKS.map((m) => <VMark key={m}><span>{m}</span></VMark>)}
                  <VMarker />
                </VRuler>
                <Canvas>
                  <Page>
                    <Block $h={60} $t={0} $noTop>
                      <Heading>经验交流</Heading>
                      <RedBox $w={100} $h={35} $t={22} $l={36} $px={5} $py={3}><Dark /></RedBox>
                    </Block>
                    <FlashBlock><FlashGray><Plugin /></FlashGray></FlashBlock>
                    <Block $h={59}>
                      <Bullets><li>&nbsp;</li><li>乡镇排行榜</li></Bullets>
                    </Block>
                    <Block $h={30}>
                      <RedBox $w={106} $h={38} $t={-3} $l={33} $px={8} $py={5}><Dark /></RedBox>
                    </Block>
                    <Block $h={30}>
                      <RedBox $w={99} $h={35} $t={0} $l={35} $px={6} $py={2}><Dark /></RedBox>
                    </Block>
                  </Page>
                  <LastBlock>
                    <RedBox $w={90} $h={37} $t={-1} $l={-3} $px={2} $py={3}>
                      <DarkBtn $pad={9} $gap={10}><VoteIco />投 票</DarkBtn>
                    </RedBox>
                  </LastBlock>
                  <RedBox $w={88} $h={34} $t={17} $l={-1} $px={1} $py={3}>
                    <DarkBtn $pad={4} $gap={4}><RedCodeIco />包含文件</DarkBtn>
                  </RedBox>
                </Canvas>
                <VBar>
                  <ScrollBtn><Chev /></ScrollBtn>
                  <Thumb $w={14} $h={56} $m="369px 0 0"><ThumbLines /></Thumb>
                  <ScrollBtn $t={2}><Chev d="down" /></ScrollBtn>
                </VBar>
              </DocBody>
              <DocStatus>
                <TagPath><Lat>&gt;</Lat><Lat>&lt;div.conleft&gt;</Lat><Lat>&lt;div.login&gt;</Lat><Lat>&lt;h1&gt;</Lat></TagPath>
                <StatusTools>
                  <PointerBox><Arrow /></PointerBox>
                  <Hand />
                  <Mag />
                </StatusTools>
                <Zoombox><Lat>100%</Lat><Caret $m={0} $c="#777" /></Zoombox>
                <StatusText $m={5} $w={61}><Lat>454 x 458</Lat><Caret $m={3} $c="#777" /></StatusText>
                <StatusSep />
                <StatusText $m={5} $w={68}><span><Mix>19 K / 3 秒</Mix></span></StatusText>
                <StatusSep />
              </DocStatus>
              <BottomStrip>
                <BottomLight><BottomTab /></BottomLight>
              </BottomStrip>
            </DocWindow>
          </LeftCol>
          <Splitter><SplitGrip /></Splitter>
          <RightCol>
            {['CSS', '应用程序', '标签检查器'].map((t) => (
              <PanelHead key={t}>
                <Grip $m="0 8px 0 0" />
                <Tri />
                <PanelLabel><Mix>{t}</Mix></PanelLabel>
              </PanelHead>
            ))}
            <PanelHead $h={17}>
              <Grip $m="0 6px 0 0" />
              <Tri $open />
              <PanelLabel>文件</PanelLabel>
              <Opts />
            </PanelHead>
            <FileTabs>
              <FileTabOn>文件</FileTabOn>
              <FileTab $m={6} $sep>资源</FileTab>
              <FileTab $m={7}>代码片断</FileTab>
            </FileTabs>
            <SiteRow>
              <SiteSelect>
                <DesktopIco />桌面
                <ScrollBtn $w={16} $h={19} $t={0} $ml="auto"><Chev d="down" /></ScrollBtn>
              </SiteSelect>
              <SiteLink>管理站点</SiteLink>
            </SiteRow>
            <FileArea>
              <FileTop>
                <FileMain>
                  <LocalHead>本地文件</LocalHead>
                  <Tree>
                    {ROWS.map((r) => (
                      <Row key={r.name}>
                        {Array.from({ length: r.l }, (_, i) => <Guide key={i} />)}
                        <Node $end={r.end}>
                          {r.kind !== 'file' && <ExpandBox $plus={r.kind === 'plus'} />}
                        </Node>
                        <NodeIcon>
                          {r.kind === 'file' ? <FileGlyph /> : <FolderGlyph open={r.kind === 'minus'} />}
                        </NodeIcon>
                        <NodeLabel><Mix>{r.name}</Mix></NodeLabel>
                      </Row>
                    ))}
                  </Tree>
                </FileMain>
                <VBar>
                  <ScrollBtn $t={1}><Chev /></ScrollBtn>
                  <Thumb $w={14} $h={80} $m="141px 0 0"><ThumbLines /></Thumb>
                  <ScrollBtn $t={188}><Chev d="down" /></ScrollBtn>
                </VBar>
              </FileTop>
              <HBar>
                <ScrollBtn $w={14} $h={14}><Chev d="left" /></ScrollBtn>
                <Thumb $w={27} $h={14} $m="0 0 0 3px"><ThumbLines $h /></Thumb>
                <ScrollBtn $w={14} $h={14} $ml="150px"><Chev d="right" /></ScrollBtn>
              </HBar>
            </FileArea>
            <Footer>
              <Globe s={16} />
              <LogBtn><Mix>日志...</Mix></LogBtn>
            </Footer>
          </RightCol>
        </Workspace>
      </Win>
    </>
  );
}
